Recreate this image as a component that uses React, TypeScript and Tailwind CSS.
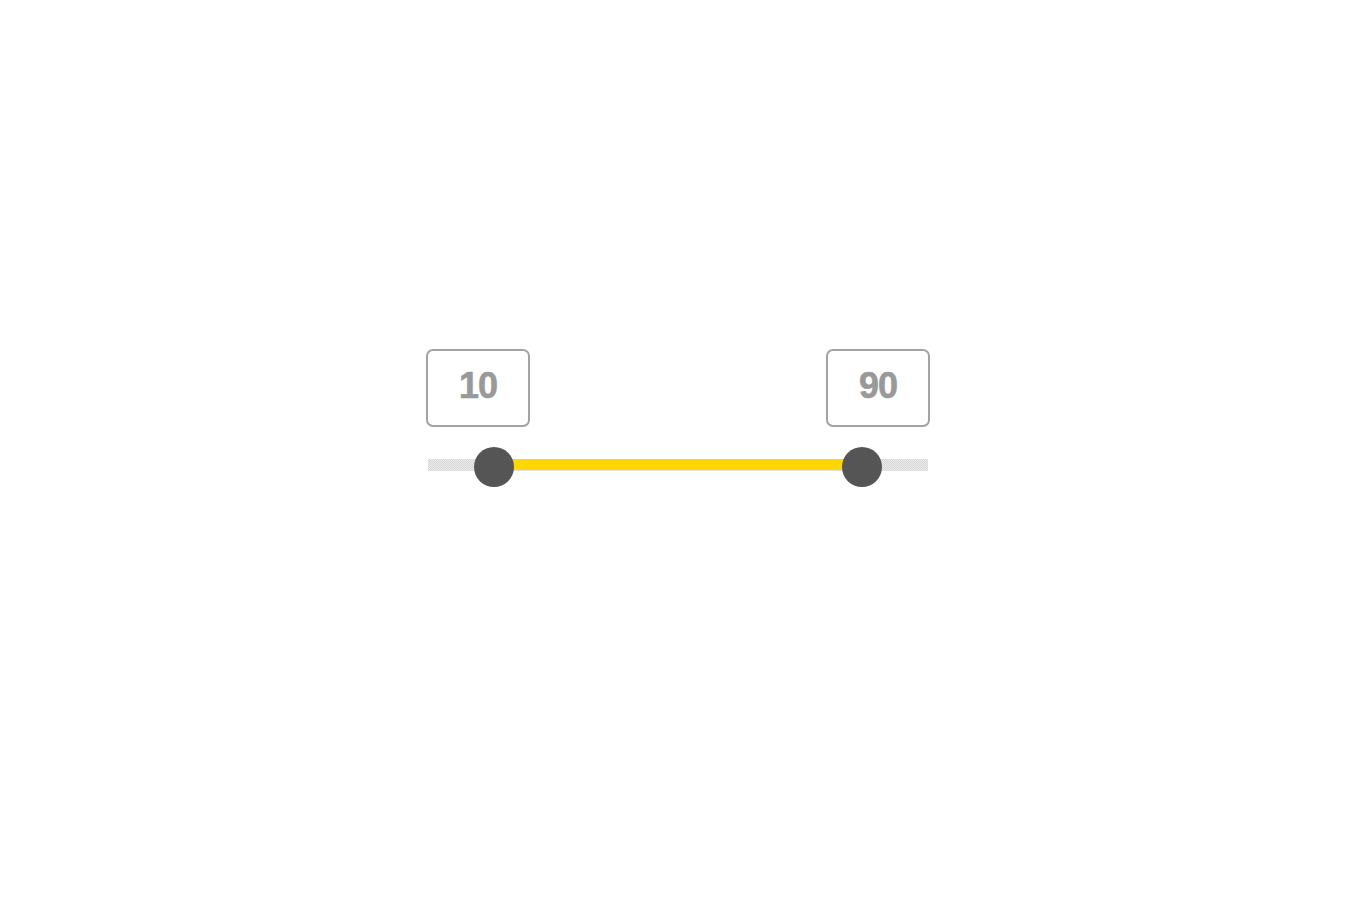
import { useState } from "react";

const TRACK_W = 500;
const THUMB = 40;

function pos(v: number) {
  // thumb travel excludes its own width
  return THUMB / 2 + (v / 100) * (TRACK_W - THUMB);
}

function ValueBox({ value }: { value: number }) {
  return (
    <div
      className="absolute top-0 flex h-[78px] w-[104px] -translate-x-1/2 items-center justify-center rounded-[7px] border-2 border-[#a3a3a3] bg-white pb-[4px]"
      style={{ left: `${value}%` }}
    >
      <span className="font-['Liberation_Sans',Arial,sans-serif] text-[36px] font-bold leading-none tracking-[-1px] text-[#999999] [-webkit-text-stroke:0.6px_#999999]">
        {value}
      </span>
    </div>
  );
}

export default function App() {
  const [range] = useState<[number, number]>([10, 90]);
  const [lo, hi] = range;

  return (
    <div className="flex min-h-[900px] w-full justify-center bg-white pt-[349px]">
      <div className="relative w-[500px]">
        <div className="relative h-[78px]">
          <ValueBox value={lo} />
          <ValueBox value={hi} />
        </div>

        <div className="relative mt-[32px] h-[12px] bg-[#e2e2e2] bg-[conic-gradient(#d6d6d6_25%,#ececec_0_50%,#d6d6d6_0_75%,#ececec_0)] bg-[length:2px_2px]">
          <div
            className="absolute top-0 h-[11px] bg-[#ffd700]"
            style={{ left: pos(lo), width: pos(hi) - pos(lo) }}
          />
          {[lo, hi].map((v, i) => (
            <div
              key={i}
              className="absolute top-[-12px] h-[40px] w-[40px] -translate-x-1/2 rounded-full bg-[#555555]"
              style={{ left: pos(v) }}
            />
          ))}
        </div>
      </div>
    </div>
  );
}
